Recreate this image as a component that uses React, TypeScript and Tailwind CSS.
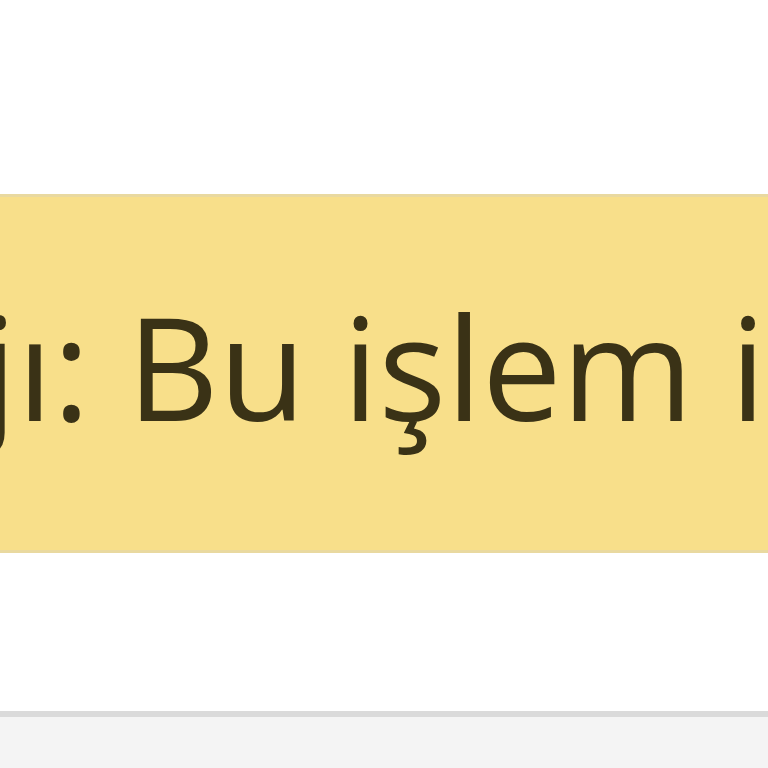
export default function App() {
  return (
    <div className="w-[768px] h-[768px] overflow-hidden bg-white flex flex-col" style={{ fontFamily: '"Open Sans", "Noto Sans", sans-serif' }}>
      <div className="h-[194px] shrink-0 bg-white" />
      <div className="h-[359px] shrink-0 bg-[#f8df8a] border-y-[3px] border-[#e9d9a0] flex items-center overflow-hidden">
        <p className="whitespace-nowrap text-[142px] leading-none text-[#3a3216] ml-[-373px] mt-[-15px]">
          Mesajı: Bu işlem için yetkiniz bulunmamaktadır.
        </p>
      </div>
      <div className="h-[158px] shrink-0 bg-white" />
      <div className="flex-1 bg-[#f4f4f4] border-t-[6px] border-[#dadada]" />
    </div>
  );
}
